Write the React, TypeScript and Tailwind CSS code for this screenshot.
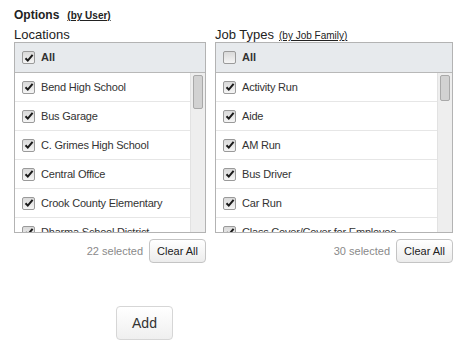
import React from "react"

const locations = [
  "Bend High School",
  "Bus Garage",
  "C. Grimes High School",
  "Central Office",
  "Crook County Elementary",
  "Dharma School District",
]

const jobTypes = [
  "Activity Run",
  "Aide",
  "AM Run",
  "Bus Driver",
  "Car Run",
  "Class Cover/Cover for Employee",
]

function Check({ checked }: { checked: boolean }) {
  return (
    <span className="relative inline-flex h-[13px] w-[13px] shrink-0 items-center justify-center rounded-[2px] border border-[#9a9a9a] bg-gradient-to-b from-[#d9d9d9] to-[#f5f5f5]">
      {checked && (
        <svg className="h-[10px] w-[10px]" viewBox="0 0 10 10">
          <path d="M1.5 5.2 L3.8 7.6 L8.6 1.8" fill="none" stroke="#1a1a1a" strokeWidth="2" />
        </svg>
      )}
    </span>
  )
}

function ListBox({
  width,
  items,
  allChecked,
  thumbHeight,
}: {
  width: string
  items: string[]
  allChecked: boolean
  thumbHeight: string
}) {
  return (
    <div className={`${width} border border-[#b3b3b3] bg-white`}>
      <div className="flex h-[30px] items-center gap-[6px] border-b border-[#b8b8b8] bg-[#e7eaed] pl-[7px]">
        <Check checked={allChecked} />
        <span className="text-[11px] font-bold text-[#333]">All</span>
      </div>
      <div className="flex h-[159px] overflow-hidden">
        <div className="flex-1 overflow-hidden">
          {items.map((item) => (
            <div
              key={item}
              className="flex h-[29px] items-center gap-[6px] whitespace-nowrap border-b border-[#e6e6e6] pl-[7px] text-[11px] tracking-[-0.2px] text-[#333]"
            >
              <Check checked />
              <span>{item}</span>
            </div>
          ))}
        </div>
        <div className="w-[15px] border-l border-[#e2e2e2] bg-[#eeeeee] pt-[1px]">
          <div className={`mx-auto mt-[1px] ${thumbHeight} w-[10px] rounded-[2px] border border-[#a9a9a9] bg-[#d2d2d2]`} />
        </div>
      </div>
    </div>
  )
}

function Footer({ count }: { count: number }) {
  return (
    <div className="mt-[6px] flex items-center justify-end gap-[6px]">
      <span className="text-[11px] text-[#8a8a8a]">{count} selected</span>
      <button className="h-[24px] w-[57px] rounded-[4px] border border-[#c4c4c4] bg-gradient-to-b from-white to-[#ececec] text-[11px] text-[#222]">
        Clear All
      </button>
    </div>
  )
}

export default function App() {
  return (
    <div
      className="h-[348px] w-[476px] bg-white pl-[14px] pt-[6px] text-[#333]"
      style={{ fontFamily: '"Liberation Sans", Arial, sans-serif' }}
    >
      <div className="flex items-baseline gap-[8px]">
        <span className="text-[12px] font-bold text-[#222]">Options</span>
        <span className="text-[10px] font-bold text-[#222] underline">(by User)</span>
      </div>
      <div className="mt-[3px] flex gap-[9px]">
        <div className="w-[192px]">
          <div className="h-[15px] text-[13px] leading-[15px] text-[#222]">Locations</div>
          <ListBox width="w-[192px]" items={locations} allChecked thumbHeight="h-[34px]" />
          <Footer count={22} />
        </div>
        <div className="w-[238px]">
          <div className="flex h-[15px] items-baseline gap-[5px] leading-[15px]">
            <span className="text-[13px] text-[#222]">Job Types</span>
            <span className="text-[10px] text-[#222] underline">(by Job Family)</span>
          </div>
          <ListBox width="w-[238px]" items={jobTypes} allChecked={false} thumbHeight="h-[26px]" />
          <Footer count={30} />
        </div>
      </div>
      <div className="mt-[43px] pl-[102px]">
        <button className="h-[34px] w-[57px] rounded-[4px] border border-[#d6d6d6] bg-gradient-to-b from-white to-[#efefef] text-[14px] text-[#333]">
          Add
        </button>
      </div>
    </div>
  )
}
